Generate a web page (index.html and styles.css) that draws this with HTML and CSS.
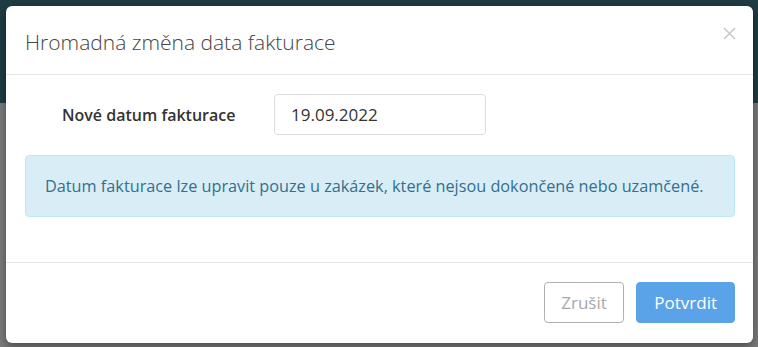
FILE: index.html
```html
<!DOCTYPE html>
<html lang="cs">
<head>
    <meta charset="UTF-8">
    <meta name="viewport" content="width=device-width, initial-scale=1.0">
    <title>Hromadná změna data fakturace</title>
    <link rel="stylesheet" href="styles.css">
</head>
<body>

    <!-- Page behind the backdrop -->
    <div class="page">
        <div class="page-header">
            <span class="search-hint">Vyhledávání</span>
        </div>
        <div class="page-content"></div>
    </div>

    <!-- Modal -->
    <div class="modal">
        <div class="modal-header">
            <h4 class="modal-title">Hromadná změna data fakturace</h4>
            <button type="button" class="close" aria-label="Zavřít">
                <svg width="13" height="13" viewBox="0 0 13 13">
                    <path d="M1 1 L12 12 M12 1 L1 12" stroke="#c9c9c9" stroke-width="1.6" fill="none"/>
                </svg>
            </button>
        </div>
        <div class="modal-body">
            <div class="form-row">
                <label class="form-label" for="invoiceDate">Nové datum fakturace</label>
                <input class="form-input" type="text" id="invoiceDate" value="19.09.2022">
            </div>
            <div class="alert-info">
                Datum fakturace lze upravit pouze u zakázek, které nejsou dokončené nebo uzamčené.
            </div>
        </div>
        <div class="modal-footer">
            <button type="button" class="btn btn-default">Zrušit</button>
            <button type="button" class="btn btn-primary">Potvrdit</button>
        </div>
    </div>

</body>
</html>
```

FILE: styles.css
```css
body {
    font-family: "Open Sans", Arial, sans-serif;
    margin: 0;
    padding: 0;
    background-color: #7a7a7a;
    overflow: hidden;
}
.page {
    height: 347px;
}
.page-header {
    height: 103px;
    background-color: #1f3b44;
    text-align: right;
}
.search-hint {
    display: inline-block;
    margin-top: -10px;
    margin-right: 20px;
    color: #2f6a6e;
    font-size: 15px;
}
.page-content {
    height: 244px;
    background-color: #7a7a7a;
}
.modal {
    position: absolute;
    top: 6px;
    left: 6px;
    width: 747px;
    height: 337px;
    background-color: #fff;
    border-radius: 6px;
    box-shadow: 0 3px 9px rgba(0, 0, 0, 0.4);
    display: flex;
    flex-direction: column;
}
.modal-header {
    height: 69px;
    box-sizing: border-box;
    border-bottom: 1px solid #e5e5e5;
    display: flex;
    align-items: center;
    justify-content: space-between;
    padding: 0 17px 0 19px;
}
.modal-title {
    margin: 3px 0 0;
    font-size: 21px;
    font-weight: 300;
    color: #444;
}
.close {
    border: none;
    background: none;
    padding: 0;
    margin-top: -13px;
    cursor: pointer;
    line-height: 0;
}
.modal-body {
    flex: 1;
    padding: 19px 18px 0 19px;
}
.form-row {
    display: flex;
    align-items: center;
}
.form-label {
    width: 249px;
    box-sizing: border-box;
    padding-left: 37px;
    font-size: 16px;
    font-weight: 600;
    color: #333;
}
.form-input {
    width: 212px;
    height: 41px;
    box-sizing: border-box;
    border: 1px solid #ddd;
    border-radius: 4px;
    padding: 0 16px;
    font-family: "Open Sans", Arial, sans-serif;
    font-size: 17px;
    color: #333;
}
.alert-info {
    margin-top: 20px;
    height: 62px;
    box-sizing: border-box;
    display: flex;
    align-items: center;
    padding: 0 19px;
    background-color: #d9edf7;
    border: 1px solid #bce8f1;
    border-radius: 4px;
    color: #31708f;
    font-size: 16.25px;
}
.modal-footer {
    border-top: 1px solid #e5e5e5;
    padding: 19px 18px 20px 0;
    display: flex;
    justify-content: flex-end;
    gap: 12px;
}
.btn {
    height: 41px;
    padding: 0 16.5px;
    border-radius: 4px;
    font-family: "Open Sans", Arial, sans-serif;
    font-size: 17px;
    cursor: pointer;
}
.btn-default {
    background-color: #fff;
    border: 1px solid #b0b0b0;
    color: #a8a8a8;
}
.btn-primary {
    background-color: #5ba3e9;
    border: 1px solid #5ba3e9;
    color: #fff;
    padding: 0 17px;
}
```
